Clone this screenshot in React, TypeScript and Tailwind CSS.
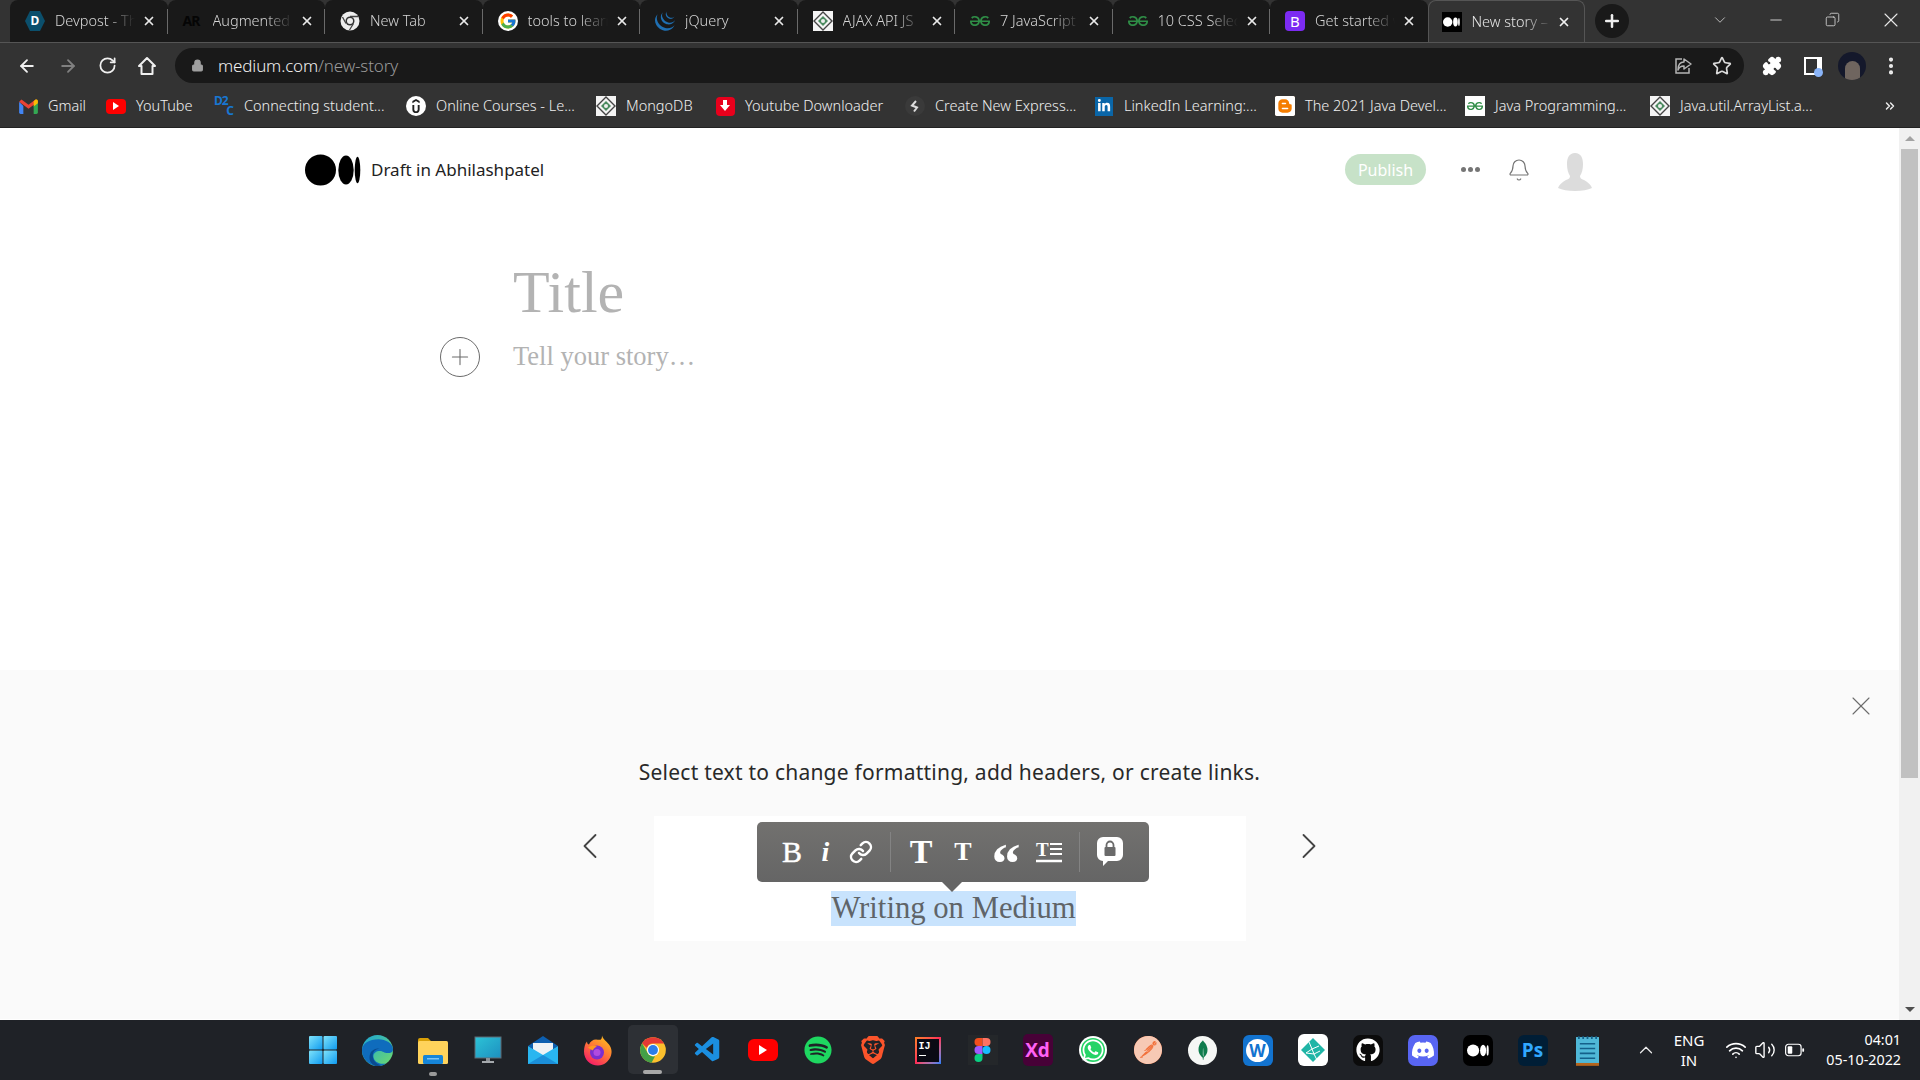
import React from 'react';
import { ArrowLeft, ArrowRight, RotateCw, Lock, Star, Puzzle, EllipsisVertical, Plus, X, ChevronDown, ChevronUp, ChevronsRight, Minus, Copy, Wifi, Volume2, ChevronLeft, ChevronRight, Bell, Link as LinkIcon } from 'lucide-react';
import { FaWhatsapp, FaGithub, FaDiscord, FaLinkedinIn, FaSpotify } from 'react-icons/fa';
import { FcGoogle } from 'react-icons/fc';
import { SiJquery, SiGeeksforgeeks, SiUdemy, SiBlogger, SiBrave, SiPostman, SiMongodb } from 'react-icons/si';
import { VscVscode } from 'react-icons/vsc';

const MediumDots = ({ className, fill = '#000' }: { className?: string; fill?: string }) => (
  <svg viewBox="0 0 56 32" className={className}>
    <ellipse cx="15.5" cy="16" rx="15.5" ry="15.5" fill={fill} />
    <ellipse cx="41" cy="16" rx="7.7" ry="14.6" fill={fill} />
    <ellipse cx="52.5" cy="16" rx="2.8" ry="13.2" fill={fill} />
  </svg>
);

const DiamondFav = () => (
  <svg viewBox="0 0 20 20" className="w-5 h-5">
    <rect width="20" height="20" fill="#f4f4f4" />
    <path d="M10 1 19 10 10 19 1 10Z" fill="none" stroke="#444" strokeWidth="1.4" />
    <path d="M10 5 15 10 10 15 5 10Z" fill="#4a8a5f" />
    <circle cx="10" cy="10" r="2" fill="#eee" />
  </svg>
);

const ChromeLogo = ({ className }: { className?: string }) => (
  <svg viewBox="0 0 48 48" className={className}>
    <circle cx="24" cy="24" r="22" fill="#fbc02d" />
    <path d="M24 2a22 22 0 0 1 19 11H24a11 11 0 0 0-10.5 7.5L5.2 12.5A22 22 0 0 1 24 2Z" fill="#e53935" />
    <path d="M5.2 12.5 14 27.5a11 11 0 0 0 13.5 7.2L21.500 46A22 22 0 0 1 5.200 12.500Z" fill="#43a047" />
    <circle cx="24" cy="24" r="10.500" fill="#fff" />
    <circle cx="24" cy="24" r="8.500" fill="#2b7de9" />
  </svg>
);

const ChromeGray = () => (
  <svg viewBox="0 0 20 20" className="w-5 h-5">
    <circle cx="10" cy="10" r="9.500" fill="#eee" />
    <circle cx="10" cy="10" r="4.500" fill="#333" />
    <circle cx="10" cy="10" r="3" fill="#eee" />
    <path d="M10 5.500h8M6 12.500 2.500 6M13.500 12.500 9.500 19" stroke="#444" strokeWidth="1.300" />
  </svg>
);

const tabs: { title: string; icon: React.ReactNode }[] = [
  {
    title: 'Devpost - The home',
    icon: (
      <div className="w-5 h-5 flex items-center justify-center bg-[#0b4f6c] [clip-path:polygon(25%_0,75%_0,100%_50%,75%_100%,25%_100%,0_50%)] text-white text-[12px] font-bold">D</div>
    ),
  },
  { title: 'Augmented', icon: <div className="w-5 h-5 text-[#050505] text-[14px] font-bold tracking-[-1px] leading-5">AR</div> },
  { title: 'New Tab', icon: <ChromeGray /> },
  { title: 'tools to learn', icon: <FcGoogle className="w-5 h-5 bg-white rounded-full p-[1px]" /> },
  { title: 'jQuery', icon: <SiJquery className="w-5 h-5 text-[#1f6fb2]" /> },
  { title: 'AJAX API JS', icon: <DiamondFav /> },
  { title: '7 JavaScript', icon: <SiGeeksforgeeks className="w-5 h-5 text-[#2f8d46]" /> },
  { title: '10 CSS Selectors', icon: <SiGeeksforgeeks className="w-5 h-5 text-[#2f8d46]" /> },
  { title: 'Get started with', icon: <div className="w-5 h-5 rounded-[4px] bg-[#7c2bf2] text-white text-[15px] leading-5 text-center">B</div> },
];

const bookmarks: { title: string; width: string; icon: React.ReactNode }[] = [
  {
    title: 'Gmail',
    width: 'w-[88px]',
    icon: (
      <svg viewBox="0 0 20 16" className="w-[19px] h-[15px]">
        <path d="M0 3v11.500A1.500 1.500 0 0 0 1.500 16H4.500V7.500Z" fill="#4285f4" />
        <path d="M20 3v11.500a1.500 1.500 0 0 1-1.500 1.500H15.500V7.500Z" fill="#34a853" />
        <path d="M0 3 10 10.500 20 3 17.500.500 10 6 2.500.500Z" fill="#ea4335" />
        <path d="M15.500 2.500V8L20 4.500V2.500A1.800 1.800 0 0 0 17.500.500Z" fill="#fbbc04" />
      </svg>
    ),
  },
  {
    title: 'YouTube',
    width: 'w-[108px]',
    icon: (
      <div className="w-5 h-[15px] rounded-[4px] bg-[#f00] flex items-center justify-center">
        <div className="w-0 h-0 border-y-[4px] border-y-transparent border-l-[6px] border-l-white" />
      </div>
    ),
  },
  {
    title: 'Connecting student...',
    width: 'w-[192px]',
    icon: (
      <div className="w-5 h-5 overflow-hidden text-[#1877d2] text-[12px] font-bold leading-[10px] tracking-[-1px]">
        D2
        <div className="text-right pr-[1px]">C</div>
      </div>
    ),
  },
  {
    title: 'Online Courses - Le...',
    width: 'w-[190px]',
    icon: (
      <div className="w-5 h-5 rounded-full bg-white flex items-center justify-center">
        <SiUdemy className="w-[14px] h-[14px] text-[#222]" />
      </div>
    ),
  },
  { title: 'MongoDB', width: 'w-[119px]', icon: <DiamondFav /> },
  {
    title: 'Youtube Downloader',
    width: 'w-[190px]',
    icon: (
      <div className="w-[19px] h-[19px] rounded-[4px] bg-[#e8001c] flex items-center justify-center">
        <svg viewBox="0 0 12 12" className="w-3 h-3"><path d="M4 0h4v5h3L6 11 1 5h3Z" fill="#fff" /></svg>
      </div>
    ),
  },
  {
    title: 'Create New Express...',
    width: 'w-[189px]',
    icon: (
      <svg viewBox="0 0 20 20" className="w-5 h-5">
        <circle cx="10" cy="10" r="10" fill="#3a3a3a" />
        <path d="M11 5 7 9.500l5 2-3 4" fill="none" stroke="#ddd" strokeWidth="2" />
      </svg>
    ),
  },
  {
    title: 'LinkedIn Learning:...',
    width: 'w-[181px]',
    icon: (
      <div className="w-[18px] h-[19px] bg-[#0a66a8] flex items-center justify-center">
        <FaLinkedinIn className="w-[14px] h-[14px] text-white" />
      </div>
    ),
  },
  {
    title: 'The 2021 Java Devel...',
    width: 'w-[190px]',
    icon: (
      <div className="w-5 h-5 rounded-[3px] bg-[#f57d00] flex items-center justify-center">
        <SiBlogger className="w-5 h-5 text-white" />
      </div>
    ),
  },
  {
    title: 'Java Programming...',
    width: 'w-[185px]',
    icon: (
      <div className="w-5 h-5 bg-white flex items-center justify-center">
        <SiGeeksforgeeks className="w-4 h-4 text-[#2f8d46]" />
      </div>
    ),
  },
  { title: 'Java.util.ArrayList.a...', width: 'w-[190px]', icon: <DiamondFav /> },
];

const WindowsLogo = () => (
  <svg viewBox="0 0 30 30" className="w-[30px] h-[30px]">
    <defs>
      <linearGradient id="winBlue" x1="0" y1="0" x2="1" y2="1">
        <stop offset="0" stopColor="#7fe3fb" />
        <stop offset="1" stopColor="#0f9bf0" />
      </linearGradient>
    </defs>
    <rect x="1" y="1" width="13.500" height="13.500" rx="1" fill="url(#winBlue)" />
    <rect x="15.500" y="1" width="13.500" height="13.500" rx="1" fill="url(#winBlue)" />
    <rect x="1" y="15.500" width="13.500" height="13.500" rx="1" fill="url(#winBlue)" />
    <rect x="15.500" y="15.500" width="13.500" height="13.500" rx="1" fill="url(#winBlue)" />
  </svg>
);

const EdgeLogo = () => (
  <svg viewBox="0 0 30 30" className="w-[31px] h-[31px]">
    <defs>
      <linearGradient id="edgeTop" x1="0" y1="0" x2="1" y2="1">
        <stop offset="0" stopColor="#1ba5d8" />
        <stop offset="1" stopColor="#6fdc6a" />
      </linearGradient>
    </defs>
    <circle cx="15" cy="15" r="15" fill="url(#edgeTop)" />
    <path d="M0 15C0 23 7 30 15 30c3 0 6-.800 8-2.500-6 1.500-12-2-12-7 0-3 3-5 6-5 3.500 0 4 2 8 2 3 0 5-1 5-3.500C30 8 23 4 16 4 7 4 0 8 0 15Z" fill="#0f6cbd" />
    <path d="M13 30C8 28 6 23 8 18c1-3 4-5 9-5-5 1-7 4-6.500 8 .3 3.500 3 7 8 8.500-1.500.4-3.500.6-5.500.5Z" fill="#0a4b8f" />
  </svg>
);

const FolderLogo = () => (
  <svg viewBox="0 0 30 30" className="w-[30px] h-[30px]">
    <path d="M0 5a2 2 0 0 1 2-2h8l3 3h15v4H0Z" fill="#d9a007" />
    <rect y="6" width="30" height="23" rx="1.500" fill="#ffd35b" />
    <rect x="5" y="20" width="20" height="9" rx="1.500" fill="#1685d8" />
    <rect x="9" y="23" width="12" height="1.500" fill="#7cc4f5" />
  </svg>
);

const MonitorLogo = () => (
  <svg viewBox="0 0 30 30" className="w-[30px] h-[30px]">
    <defs>
      <linearGradient id="monitor" x1="0" y1="0" x2="1" y2="1">
        <stop offset="0" stopColor="#2cc3d6" />
        <stop offset="1" stopColor="#1d8fc0" />
      </linearGradient>
    </defs>
    <rect x="2" y="2" width="26" height="21" fill="url(#monitor)" stroke="#5e6b75" />
    <rect x="13" y="23" width="4" height="3" fill="#8a8f94" />
    <rect x="9" y="26" width="12" height="2" fill="#a5a9ad" />
  </svg>
);

const MailLogo = () => (
  <svg viewBox="0 0 30 30" className="w-[30px] h-[30px]">
    <path d="M0 11 15 1l15 10-15 9Z" fill="#0d5fb0" />
    <path d="M5 8h20v8l-10 5-10-5Z" fill="#eef2f5" />
    <path d="M0 11v18h30V11L15 20Z" fill="#29b6f0" />
    <path d="M0 29 15 20l15 9Z" fill="#1b8fd9" />
  </svg>
);

const FirefoxLogo = () => (
  <svg viewBox="0 0 30 30" className="w-[30px] h-[31px]">
    <defs>
      <linearGradient id="fox" x1="0.800" y1="0" x2="0.200" y2="1">
        <stop offset="0" stopColor="#ffc21a" />
        <stop offset="0.500" stopColor="#ff7139" />
        <stop offset="1" stopColor="#f5156c" />
      </linearGradient>
    </defs>
    <path d="M19 0c1 4 4 5 7 9 3 4 3 8 2 11-2 6-7 10-13 10C7 30 1 24 1 16 1 12 2 8 4 6c0 2 1 3 2 3 1-3 4-5 7-5 3 0 6 2 6-4Z" fill="url(#fox)" />
    <circle cx="14" cy="17" r="7" fill="#7b2fd0" />
    <circle cx="14" cy="17" r="3.500" fill="#b04be0" />
    <path d="M5 12c3-2 6-2 9-1-2 1-4 2-4 4-2-1-4-2-5-3Z" fill="#ff9a1f" />
  </svg>
);

const FigmaLogo = () => (
  <div className="w-[30px] h-[30px] bg-[#24272a] flex items-center justify-center">
    <svg viewBox="0 0 20 30" className="w-[17px] h-[24px]">
      <path d="M5 0h5v10H5A5 5 0 0 1 5 0Z" fill="#f24e1e" />
      <path d="M10 0h5a5 5 0 0 1 0 10h-5Z" fill="#ff7262" />
      <path d="M5 10h5v10H5a5 5 0 0 1 0-10Z" fill="#a259ff" />
      <circle cx="15" cy="15" r="5" fill="#1abcfe" />
      <path d="M5 20h5v5a5 5 0 1 1-5-5Z" fill="#0acf83" />
    </svg>
  </div>
);

const NetlifyLogo = () => (
  <div className="w-[30px] h-[32px] rounded-[6px] bg-white flex items-center justify-center">
    <svg viewBox="0 0 26 26" className="w-[26px] h-[26px]">
      <path d="M13 1 25 13 13 25 1 13Z" fill="#20b5a6" />
      <path d="M9 5l3 7-6 4 8 1 3 6M12 12l7-3M14 17l6-3M12 12l2 5" fill="none" stroke="#fff" strokeWidth="1" />
    </svg>
  </div>
);

const IntellijLogo = () => (
  <div className="w-[26px] h-[27px] p-[2px] bg-gradient-to-br from-[#fc801d] via-[#fe2857] to-[#087cfa]">
    <div className="w-full h-full bg-[#0a0a14] text-white text-[10px] font-bold leading-[11px] pl-[2px] pt-[2px] font-['Liberation_Mono',monospace]">
      IJ
      <div className="w-[7px] h-[1px] bg-white mt-[3px]" />
    </div>
  </div>
);

const taskbarIcons: React.ReactNode[] = [
  <WindowsLogo />,
  <EdgeLogo />,
  <FolderLogo />,
  <MonitorLogo />,
  <MailLogo />,
  <FirefoxLogo />,
  <ChromeLogo className="w-7 h-7" />,
  <VscVscode className="w-[30px] h-[30px] text-[#1b8fe0]" />,
  <div className="w-[30px] h-[22px] rounded-[6px] bg-[#f00] flex items-center justify-center">
    <div className="w-0 h-0 border-y-[5px] border-y-transparent border-l-[8px] border-l-white" />
  </div>,
  <FaSpotify className="w-7 h-7 text-[#1ed760]" />,
  <SiBrave className="w-[28px] h-[30px] text-[#fb542b]" />,
  <IntellijLogo />,
  <FigmaLogo />,
  <div className="w-[30px] h-[32px] rounded-[5px] bg-[#470137] text-[#ff61f6] text-[19px] font-bold flex items-center justify-center font-['Open_Sans',sans-serif]">Xd</div>,
  <div className="w-7 h-7 rounded-full bg-white flex items-center justify-center">
    <div className="w-[24px] h-[24px] rounded-full bg-[#25d366] flex items-center justify-center">
      <FaWhatsapp className="w-[24px] h-[24px] text-white" />
    </div>
  </div>,
  <div className="w-7 h-7 rounded-full bg-[#f2703a] flex items-center justify-center">
    <SiPostman className="w-7 h-7 text-[#f7c9b4]" />
  </div>,
  <div className="w-[29px] h-[29px] rounded-full bg-[#f5f7f5] flex items-center justify-center">
    <SiMongodb className="w-[20px] h-[20px] text-[#0f7c4d]" />
  </div>,
  <div className="w-[30px] h-[31px] rounded-[6px] bg-[#1273cf] flex items-center justify-center">
    <div className="w-[23px] h-[23px] rounded-full bg-white text-[#1273cf] text-[17px] font-bold leading-[23px] text-center font-['Open_Sans',sans-serif]">W</div>
  </div>,
  <NetlifyLogo />,
  <div className="w-[30px] h-[31px] rounded-[7px] bg-[#0b0b0b] flex items-center justify-center">
    <FaGithub className="w-[24px] h-[24px] text-white" />
  </div>,
  <div className="w-[30px] h-[31px] rounded-[7px] bg-[#5865f2] flex items-center justify-center">
    <FaDiscord className="w-[24px] h-[24px] text-white" />
  </div>,
  <div className="w-[30px] h-[31px] rounded-[7px] bg-black flex items-center justify-center">
    <MediumDots className="w-[22px] h-[13px]" fill="#fff" />
  </div>,
  <div className="w-[30px] h-[31px] rounded-[6px] bg-[#001e36] text-[#31a8ff] text-[19px] font-bold flex items-center justify-center font-['Open_Sans',sans-serif]">Ps</div>,
  <svg viewBox="0 0 24 32" className="w-[23px] h-[31px]">
    <rect y="2" width="24" height="30" fill="#b5651d" />
    <rect y="2" width="24" height="27" fill="#4fb8d8" />
    <path d="M4 9h16M4 14h16M4 19h16M4 24h16" stroke="#14608a" strokeWidth="1.600" />
    <path d="M3 1v3M7.500 1v3M12 1v3M16.500 1v3M21 1v3" stroke="#14608a" strokeWidth="1.800" />
  </svg>,
];

export default function App() {
  return (
    <div className="w-[1920px] h-[1080px] flex flex-col overflow-hidden bg-white font-['Noto_Sans',sans-serif]">
      {/* Tab strip */}
      <div className="h-[43px] bg-[#333333] border-b border-[#555] flex pl-[10px] shrink-0">
        {tabs.map((tab, i) => (
          <div key={tab.title} className="w-[157.500px] h-[42px] bg-[#191919] rounded-t-[8px] flex items-center pl-[15px] pr-[10px] relative">
            <div className="w-5 h-5 shrink-0 flex items-center justify-center">{tab.icon}</div>
            <div className="ml-[10px] w-[80px] overflow-hidden whitespace-nowrap text-[14.500px] text-[#d6d6d6] font-light [mask-image:linear-gradient(to_right,#000_65%,transparent)]">{tab.title}</div>
            <X className="w-[14px] h-[14px] ml-[7px] text-[#e8e8e8]" strokeWidth={3} />
            {i < tabs.length - 1 && <div className="absolute right-0 top-[9px] h-[25px] w-px bg-[#6a6a6a]" />}
          </div>
        ))}
        <div className="w-[157px] h-[42px] bg-[#333333] rounded-t-[8px] border border-b-0 border-[#555] flex items-center pl-[13px] relative">
          <div className="w-5 h-5 bg-black flex items-center justify-center shrink-0">
            <MediumDots className="w-[17px] h-[10px]" fill="#fff" />
          </div>
          <div className="ml-[10px] w-[80px] overflow-hidden whitespace-nowrap text-[14.500px] text-[#e6e6e6] font-light [mask-image:linear-gradient(to_right,#000_65%,transparent)]">New story – Medium</div>
          <X className="w-[14px] h-[14px] ml-[5px] text-[#f0f0f0]" strokeWidth={3} />
        </div>
        <div className="w-[34px] h-[34px] rounded-full bg-[#191919] flex items-center justify-center ml-[10px] mt-1 shrink-0">
          <Plus className="w-[20px] h-[20px] text-[#eee]" strokeWidth={3} />
        </div>
        <div className="flex-1 flex items-start pt-[11px] pl-[82px]">
          <ChevronDown className="w-[18px] h-[18px] text-[#bbb] shrink-0" strokeWidth={1.300} />
          <Minus className="w-[18px] h-[18px] text-[#ddd] ml-[38px] shrink-0" strokeWidth={1.200} />
          <Copy className="w-[15px] h-[15px] text-[#ddd] ml-[40px] mt-[1px] -scale-x-100 shrink-0" strokeWidth={1.300} />
          <X className="w-[24px] h-[24px] text-[#e8e8e8] ml-[39px] -mt-[3px] shrink-0" strokeWidth={1.100} />
        </div>
      </div>

      {/* Toolbar */}
      <div className="h-[41px] bg-[#333333] flex items-start pt-[5px] shrink-0">
        <div className="w-[175px] h-[35px] flex items-center pl-[17px] shrink-0">
          <ArrowLeft className="w-[20px] h-[20px] text-[#f0f0f0]" strokeWidth={2.200} />
          <ArrowRight className="w-[20px] h-[20px] text-[#808080] ml-[21px]" strokeWidth={2.200} />
          <RotateCw className="w-[19px] h-[19px] text-[#f0f0f0] ml-[20px]" strokeWidth={2.200} />
          <svg viewBox="0 0 20 20" className="w-[20px] h-[20px] ml-[20px]">
            <path d="M10 2 2 10h2.500v8h11v-8H18Z" fill="none" stroke="#f0f0f0" strokeWidth="2" strokeLinejoin="round" />
          </svg>
        </div>
        <div className="w-[1569px] h-[35px] rounded-full bg-[#191919] flex items-center pl-[16px] pr-[10px] shrink-0">
          <Lock className="w-[13px] h-[13px] text-[#a0a0a0]" fill="#a0a0a0" />
          <div className="ml-[14px] text-[17px] tracking-[-0.150px] font-light text-[#f0f0f0]">
            medium.com<span className="text-[#9a9a9a]">/new-story</span>
          </div>
          <div className="ml-auto flex items-center">
            <svg viewBox="0 0 20 20" className="w-[20px] h-[20px]">
              <path d="M9 3H3v14h13v-5" fill="none" stroke="#b5b5b5" strokeWidth="1.500" />
              <path d="M11 3l7 5-7 5v-3c-3 0-5 1-6 4 0-5 2-8 6-8Z" fill="none" stroke="#b5b5b5" strokeWidth="1.500" strokeLinejoin="round" />
            </svg>
            <Star className="w-[20px] h-[20px] text-[#dcdcdc] ml-[19px] mr-[2px]" strokeWidth={2} />
          </div>
        </div>
        <div className="flex-1 h-[35px] flex items-center pl-[18px]">
          <Puzzle className="w-[20px] h-[20px] text-white shrink-0" fill="#fff" />
          <div className="w-[18px] h-[18px] ml-[22px] bg-white relative flex shrink-0">
            <div className="w-[11px] h-[14px] mt-[2px] ml-[2px] bg-[#333]" />
            <div className="absolute -right-[1px] -bottom-[2px] w-[9px] h-[9px] rounded-full bg-[#8ab4f8]" />
          </div>
          <div className="w-[28px] h-[28px] ml-[16px] rounded-full bg-[#14182b] flex items-end justify-center shrink-0 overflow-hidden">
            <div className="w-[15px] h-[19px] rounded-t-full bg-[#6f655f]" />
          </div>
          <EllipsisVertical className="w-[22px] h-[22px] text-[#f0f0f0] ml-[14px] shrink-0" strokeWidth={2.500} />
        </div>
      </div>

      {/* Bookmarks bar */}
      <div className="h-[45px] bg-[#333333] border-b border-[#222] flex items-center pl-[18px] pt-[2px] shrink-0 -mt-px">
        {bookmarks.map(b => (
          <div key={b.title} className={`${b.width} flex items-center shrink-0`}>
            <div className="w-5 h-5 flex items-center justify-center shrink-0">{b.icon}</div>
            <div className="ml-[10px] text-[14.500px] font-light text-[#f0f0f0] whitespace-nowrap">{b.title}</div>
          </div>
        ))}
        <ChevronsRight className="w-[14px] h-[14px] text-[#eee] ml-[43px] shrink-0" strokeWidth={2.500} />
      </div>

      <div className="flex-1 flex min-h-0">
        <div className="flex-1 flex flex-col min-w-0">
          {/* Editor */}
          <div className="h-[542px] bg-white shrink-0">
            <div className="h-[83px] flex items-center pl-[305px] pr-[307px]">
              <MediumDots className="w-[56px] h-[32px]" />
              <div className="ml-[10px] text-[17px] text-[#222]">Draft in Abhilashpatel</div>
              <div className="ml-auto w-[81px] h-[31px] rounded-full bg-[#c7e2c8] text-white text-[16px] flex items-center justify-center">Publish</div>
              <div className="ml-[35px] flex gap-[2px]">
                <div className="w-[5px] h-[5px] rounded-full bg-[#757575]" />
                <div className="w-[5px] h-[5px] rounded-full bg-[#757575]" />
                <div className="w-[5px] h-[5px] rounded-full bg-[#757575]" />
              </div>
              <Bell className="w-[24px] h-[24px] text-[#757575] ml-[27px]" strokeWidth={1.200} />
              <svg viewBox="0 0 34 38" className="w-[34px] h-[38px] ml-[27px] mt-[4px]">
                <path d="M17 0c6 0 8 5 8 11 0 5-1 9-3 12 0 2 1 3 4 4 4 2 7 5 8 8-4 2-10 3-17 3S4 37 0 35c1-3 4-6 8-8 3-1 4-2 4-4-2-3-3-7-3-12C9 5 11 0 17 0Z" fill="#dcdcdc" />
              </svg>
            </div>
            <div className="pl-[513px] pt-[45px]">
              <div className="text-[60px] leading-[72px] text-[#b3b3b3] font-['Liberation_Serif',serif]">Title</div>
              <div className="flex items-center -ml-[73px] mt-[9px]">
                <div className="w-[40px] h-[40px] rounded-full border border-[#6b6b6b] flex items-center justify-center">
                  <Plus className="w-[26px] h-[26px] text-[#6b6b6b]" strokeWidth={1} />
                </div>
                <div className="ml-[33px] text-[26.500px] text-[#b3b3b3] font-['Liberation_Serif',serif]">Tell your story…</div>
              </div>
            </div>
          </div>

          {/* Tip panel */}
          <div className="h-[349px] bg-[#fafafa] flex flex-col items-center shrink-0">
            <div className="w-full flex justify-end pr-[22px] pt-[20px]">
              <X className="w-[32px] h-[32px] text-[#6b6b6b]" strokeWidth={0.800} />
            </div>
            <div className="mt-[35px] text-[21px] tracking-[0.230px] text-[#292929]">Select text to change formatting, add headers, or create links.</div>
            <div className="mt-[27px] flex items-start">
              <ChevronLeft className="w-[44px] h-[44px] text-[#444] mr-[42px] mt-[8px]" strokeWidth={1} />
              <div className="w-[592px] h-[125px] bg-white relative flex justify-center pl-[7px] pt-[75px]">
                <div className="h-[35px] bg-[#c8e3fd] text-[30.700px] leading-[35px] text-[#5f6468] font-['Liberation_Serif',serif]">Writing on Medium</div>
                {/* Formatting toolbar */}
                <div className="absolute left-[103px] top-[6px] w-[392px] h-[60px] rounded-[5px] bg-gradient-to-b from-[#72716f] to-[#656565] flex items-center pl-[18px] text-white font-['Liberation_Serif',serif]">
                  <div className="w-[34px] text-center text-[30px] [-webkit-text-stroke:0.400px_#fff]">B</div>
                  <div className="w-[33px] text-center text-[28px] font-bold italic">i</div>
                  <div className="w-[38px] flex justify-center"><LinkIcon className="w-[24px] h-[24px]" strokeWidth={2.500} /></div>
                  <div className="w-px h-[40px] bg-[#838383] ml-[10px]" />
                  <div className="w-[40px] ml-[10px] text-center text-[34px] font-bold">T</div>
                  <div className="w-[44px] text-center text-[26px] font-bold">T</div>
                  <div className="w-[42px] text-center text-[58px] leading-[48px] font-bold h-[24px]">“</div>
                  <div className="w-[44px] flex justify-center">
                    <svg viewBox="0 0 28 24" className="w-[28px] h-[24px]">
                      <text x="1" y="16" fontSize="19" fontWeight="bold" fill="#fff" fontFamily="Liberation Serif">T</text>
                      <path d="M15 4h12M15 9h12M15 14h12" stroke="#fff" strokeWidth="2" />
                      <path d="M1 21h26" stroke="#fff" strokeWidth="2.500" />
                    </svg>
                  </div>
                  <div className="w-px h-[40px] bg-[#838383] ml-[8px]" />
                  <div className="w-[40px] ml-[10px] flex justify-center">
                    <svg viewBox="0 0 26 30" className="w-[26px] h-[30px]">
                      <path d="M6 0h14a6 6 0 0 1 6 6v12a6 6 0 0 1-6 6H11l-5 5v-5a6 6 0 0 1-6-6V6a6 6 0 0 1 6-6Z" fill="#fff" />
                      <rect x="7.500" y="10" width="11" height="9" rx="1" fill="#6a6a6a" />
                      <path d="M9.500 10V8a3.500 3.500 0 0 1 7 0v2" fill="none" stroke="#6a6a6a" strokeWidth="1.800" />
                    </svg>
                  </div>
                </div>
                <div className="absolute left-[288px] top-[66px] w-0 h-0 border-x-[10px] border-x-transparent border-t-[10px] border-t-[#656565]" />
              </div>
              <ChevronRight className="w-[44px] h-[44px] text-[#444] ml-[41px] mt-[8px]" strokeWidth={1} />
            </div>
          </div>
        </div>

        {/* Scrollbar */}
        <div className="w-[21px] bg-[#f1f1f1] flex flex-col items-center shrink-0">
          <div className="h-[21px] flex items-center justify-center">
            <div className="w-0 h-0 border-x-[5px] border-x-transparent border-b-[5px] border-b-[#a3a3a3]" />
          </div>
          <div className="w-[17px] h-[629px] bg-[#c1c1c1]" />
          <div className="flex-1 flex items-end pb-[8px]">
            <div className="w-0 h-0 border-x-[5px] border-x-transparent border-t-[5px] border-t-[#505050]" />
          </div>
        </div>
      </div>

      {/* Taskbar */}
      <div className="h-[60px] bg-[#1f2227] flex items-center pl-[295px] shrink-0">
        {taskbarIcons.map((icon, i) => (
          <div key={i} className="w-[55px] h-[60px] flex items-center justify-center relative shrink-0">
            {i === 6 && <div className="absolute left-[3px] top-[5px] w-[50px] h-[49px] rounded-[5px] bg-[#2d3035]" />}
            <div className="relative">{icon}</div>
            {i === 2 && <div className="absolute left-[24px] top-[52px] w-[8px] h-[4px] rounded-full bg-[#9a9a9a]" />}
            {i === 6 && <div className="absolute left-[18px] top-[50px] w-[19px] h-[4px] rounded-full bg-[#a8a8a8]" />}
          </div>
        ))}
        <div className="w-[57px] pl-[5px] flex justify-center shrink-0">
          <ChevronUp className="w-[22px] h-[22px] text-[#eee]" strokeWidth={1.300} />
        </div>
        <div className="w-[34px] text-[15px] leading-[20px] text-center text-white shrink-0">ENG<br />IN</div>
        <Wifi className="w-[22px] h-[22px] text-white ml-[19px] shrink-0" strokeWidth={1.800} />
        <Volume2 className="w-[22px] h-[22px] text-white ml-[7px] shrink-0" strokeWidth={1.500} />
        <svg viewBox="0 0 22 14" className="w-[20px] h-[14px] ml-[9px] shrink-0">
          <rect x=".7" y=".7" width="17" height="12.600" rx="3" fill="none" stroke="#fff" strokeWidth="1.300" />
          <rect x="3" y="3" width="5" height="8" rx="1" fill="#fff" />
          <rect x="19" y="5" width="2" height="4" rx="1" fill="#fff" />
        </svg>
        <div className="flex-1 pr-[19px] text-right text-[14.300px] leading-[20px] text-white">04:01<br />05-10-2022</div>
      </div>
    </div>
  );
}
